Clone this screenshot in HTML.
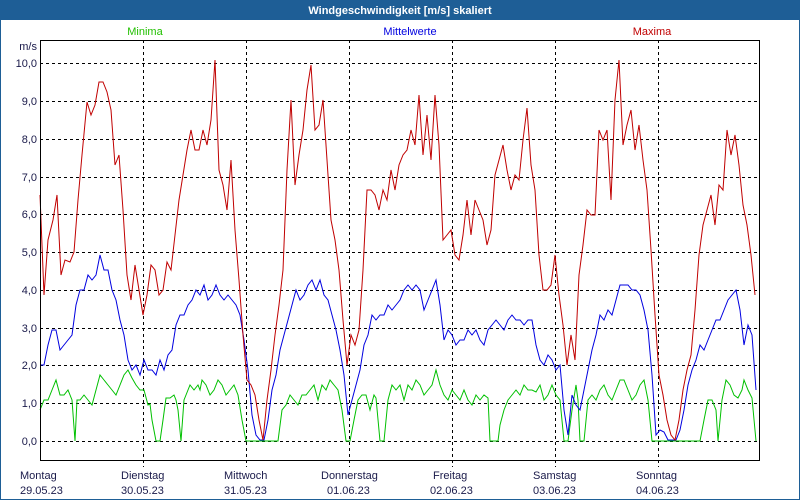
<!DOCTYPE html>
<html><head><meta charset="utf-8"><style>
html,body{margin:0;padding:0;width:800px;height:500px;overflow:hidden;background:#fff;font-family:"Liberation Sans",sans-serif;}
</style></head><body>
<svg width="800" height="500" xmlns="http://www.w3.org/2000/svg" font-family="Liberation Sans, sans-serif" font-size="11">
<rect x="0" y="0" width="800" height="500" fill="#fff"/>
<rect x="0.5" y="0.5" width="799" height="499" fill="none" stroke="#1e5e96"/>
<rect x="0" y="0" width="800" height="20" fill="#1e5e96"/>
<text x="400" y="14" text-anchor="middle" fill="#fff" font-weight="bold">Windgeschwindigkeit [m/s] skaliert</text>
<text x="145" y="35" text-anchor="middle" fill="#22c000">Minima</text>
<text x="410" y="35" text-anchor="middle" fill="#0000e0">Mittelwerte</text>
<text x="652" y="35" text-anchor="middle" fill="#c00000">Maxima</text>
<g fill="#1a1a4a" text-anchor="end">
<text x="37" y="50">m/s</text>
<text x="37" y="67">10,0</text><text x="37" y="105">9,0</text><text x="37" y="143">8,0</text><text x="37" y="181">7,0</text><text x="37" y="218">6,0</text><text x="37" y="256">5,0</text><text x="37" y="294">4,0</text><text x="37" y="332">3,0</text><text x="37" y="369">2,0</text><text x="37" y="407">1,0</text><text x="37" y="445">0,0</text>
</g>
<g stroke="#000" stroke-dasharray="3,3" stroke-width="1">
<line x1="40" x2="760" y1="63.5" y2="63.5"/><line x1="40" x2="760" y1="101.5" y2="101.5"/><line x1="40" x2="760" y1="139.5" y2="139.5"/><line x1="40" x2="760" y1="177.5" y2="177.5"/><line x1="40" x2="760" y1="214.5" y2="214.5"/><line x1="40" x2="760" y1="252.5" y2="252.5"/><line x1="40" x2="760" y1="290.5" y2="290.5"/><line x1="40" x2="760" y1="328.5" y2="328.5"/><line x1="40" x2="760" y1="365.5" y2="365.5"/><line x1="40" x2="760" y1="403.5" y2="403.5"/><line x1="40" x2="760" y1="441.5" y2="441.5"/>
<line x1="143.5" x2="143.5" y1="40" y2="467"/><line x1="246.5" x2="246.5" y1="40" y2="467"/><line x1="349.5" x2="349.5" y1="40" y2="467"/><line x1="452.5" x2="452.5" y1="40" y2="467"/><line x1="555.5" x2="555.5" y1="40" y2="467"/><line x1="658.5" x2="658.5" y1="40" y2="467"/>
</g>
<polyline fill="none" stroke="#00c000" points="40,410 44,400 48,400 52,390 56,380 60,395 64,395 68,390 72,400 75,441 77,400 80,400 84,395 88,400 92,405 96,390 100,375 104,380 108,385 112,390 116,395 120,385 124,375 128,370 132,378 136,385 140,390 144,390 148,405 150,404 152,420 156,441 160,441 163,420 166,398 170,398 174,395 176,400 178,410 181,441 184,400 186,395 190,385 194,390 198,385 200,390 202,380 206,385 210,395 214,390 218,380 222,385 226,395 230,390 234,385 238,395 242,420 246,441 278,441 282,410 286,405 290,395 294,400 298,405 302,395 306,395 310,390 314,385 318,400 322,385 326,390 330,380 334,385 338,390 342,410 346,441 350,441 354,420 358,400 362,395 366,395 370,410 374,395 376,398 380,441 384,441 388,400 392,385 396,390 400,385 404,400 408,385 412,390 416,380 420,385 424,395 428,390 432,385 436,370 440,385 444,395 448,400 452,390 456,395 460,400 464,390 468,400 472,405 476,395 480,400 484,395 488,398 490,441 498,441 500,425 504,410 508,400 512,395 516,390 520,395 524,385 528,390 532,390 536,392 540,385 544,400 548,395 552,385 556,395 560,400 564,441 568,441 572,410 576,385 578,400 580,441 584,441 588,400 592,395 596,400 600,390 604,385 608,395 612,400 616,390 620,380 624,380 628,390 632,400 636,395 640,385 644,380 648,400 652,441 700,441 704,420 708,400 712,400 716,410 718,441 722,400 726,380 730,385 734,395 738,398 742,390 744,380 748,390 752,398 756,441"/>
<polyline fill="none" stroke="#0000e0" points="40,365 44,365 48,345 52,330 56,330 60,350 64,345 68,340 72,335 76,305 80,290 84,290 88,275 92,280 96,275 100,255 104,270 108,270 112,290 116,300 120,320 124,335 128,360 132,370 136,365 140,375 144,360 148,370 152,370 156,375 160,360 164,370 168,355 172,350 176,325 180,315 184,315 188,305 192,300 196,290 200,295 204,285 208,300 212,295 216,285 220,295 224,300 228,295 232,300 236,305 240,315 244,340 248,370 252,415 256,435 260,440 264,440 268,420 272,390 276,375 280,350 284,335 288,320 292,305 296,290 300,300 304,295 308,285 312,280 316,290 320,280 324,295 328,300 332,315 336,330 340,350 344,375 348,415 352,400 356,385 360,370 364,345 368,335 372,315 376,320 380,315 384,315 388,305 392,310 396,305 400,300 404,290 408,285 412,290 416,285 420,290 424,310 428,300 432,290 436,280 440,305 444,340 448,330 452,335 456,345 460,340 464,340 468,330 472,335 476,330 480,340 484,345 488,330 492,325 496,320 500,325 504,330 508,320 512,315 516,320 520,320 524,325 528,320 532,320 536,345 540,360 544,365 548,355 552,360 556,370 560,365 564,410 568,435 572,395 576,405 580,410 584,390 588,370 592,350 596,335 600,315 604,320 608,310 612,315 616,300 620,285 624,285 628,285 632,290 636,290 640,295 644,310 648,330 652,375 656,435 660,430 664,432 668,440 676,440 680,430 684,410 688,385 692,370 696,360 700,345 704,350 708,340 712,330 716,320 720,320 724,310 728,300 732,295 736,290 740,310 744,345 748,325 752,335 756,390"/>
<polyline fill="none" stroke="#c00000" points="40,195 44,295 48,240 53,220 57,195 61,275 65,260 70,262 74,252 78,200 82,155 87,102 91,115 95,105 99,82 103,82 107,92 111,110 115,165 119,155 123,210 127,275 131,300 135,265 139,290 143,315 147,295 151,265 155,270 159,295 163,290 167,262 171,270 175,235 179,200 183,175 187,150 191,130 195,150 199,150 203,130 207,145 211,120 215,60 219,170 223,185 227,210 231,160 235,230 239,280 243,335 247,380 251,385 255,395 259,420 263,440 267,400 271,370 275,335 279,305 283,270 287,170 291,100 295,185 299,155 303,130 307,90 311,65 315,130 319,125 323,100 327,160 331,220 335,240 339,270 343,320 347,365 351,335 355,345 359,330 363,270 367,190 371,190 375,195 379,210 383,190 387,200 391,170 395,190 399,165 403,155 407,150 411,130 415,145 419,95 423,155 427,115 431,160 435,95 439,145 443,240 447,235 451,230 455,255 459,260 463,235 467,200 471,235 475,200 479,210 483,220 487,245 491,230 495,175 499,160 503,145 507,170 511,190 515,175 519,180 523,140 527,108 531,165 535,190 539,255 543,290 547,290 551,285 555,255 559,295 563,325 567,365 571,335 575,360 579,275 583,245 587,210 591,215 595,215 599,130 603,140 607,130 611,200 615,100 619,60 623,145 627,125 631,110 635,150 639,125 643,160 647,190 651,250 655,315 659,375 663,395 667,420 671,435 675,440 679,420 683,390 687,370 691,355 695,310 699,255 703,225 707,210 711,195 715,225 719,185 723,190 727,130 731,155 735,135 739,165 743,205 747,225 751,255 755,295"/>
<rect x="40.5" y="40.5" width="719" height="420" fill="none" stroke="#000"/>
<g fill="#1a1a4a">
<text x="20" y="479">Montag</text><text x="20" y="494">29.05.23</text>
<text x="121" y="479">Dienstag</text><text x="121" y="494">30.05.23</text>
<text x="224" y="479">Mittwoch</text><text x="224" y="494">31.05.23</text>
<text x="321" y="479">Donnerstag</text><text x="327" y="494">01.06.23</text>
<text x="433" y="479">Freitag</text><text x="430" y="494">02.06.23</text>
<text x="533" y="479">Samstag</text><text x="533" y="494">03.06.23</text>
<text x="636" y="479">Sonntag</text><text x="636" y="494">04.06.23</text>
</g>
</svg>
</body></html>
